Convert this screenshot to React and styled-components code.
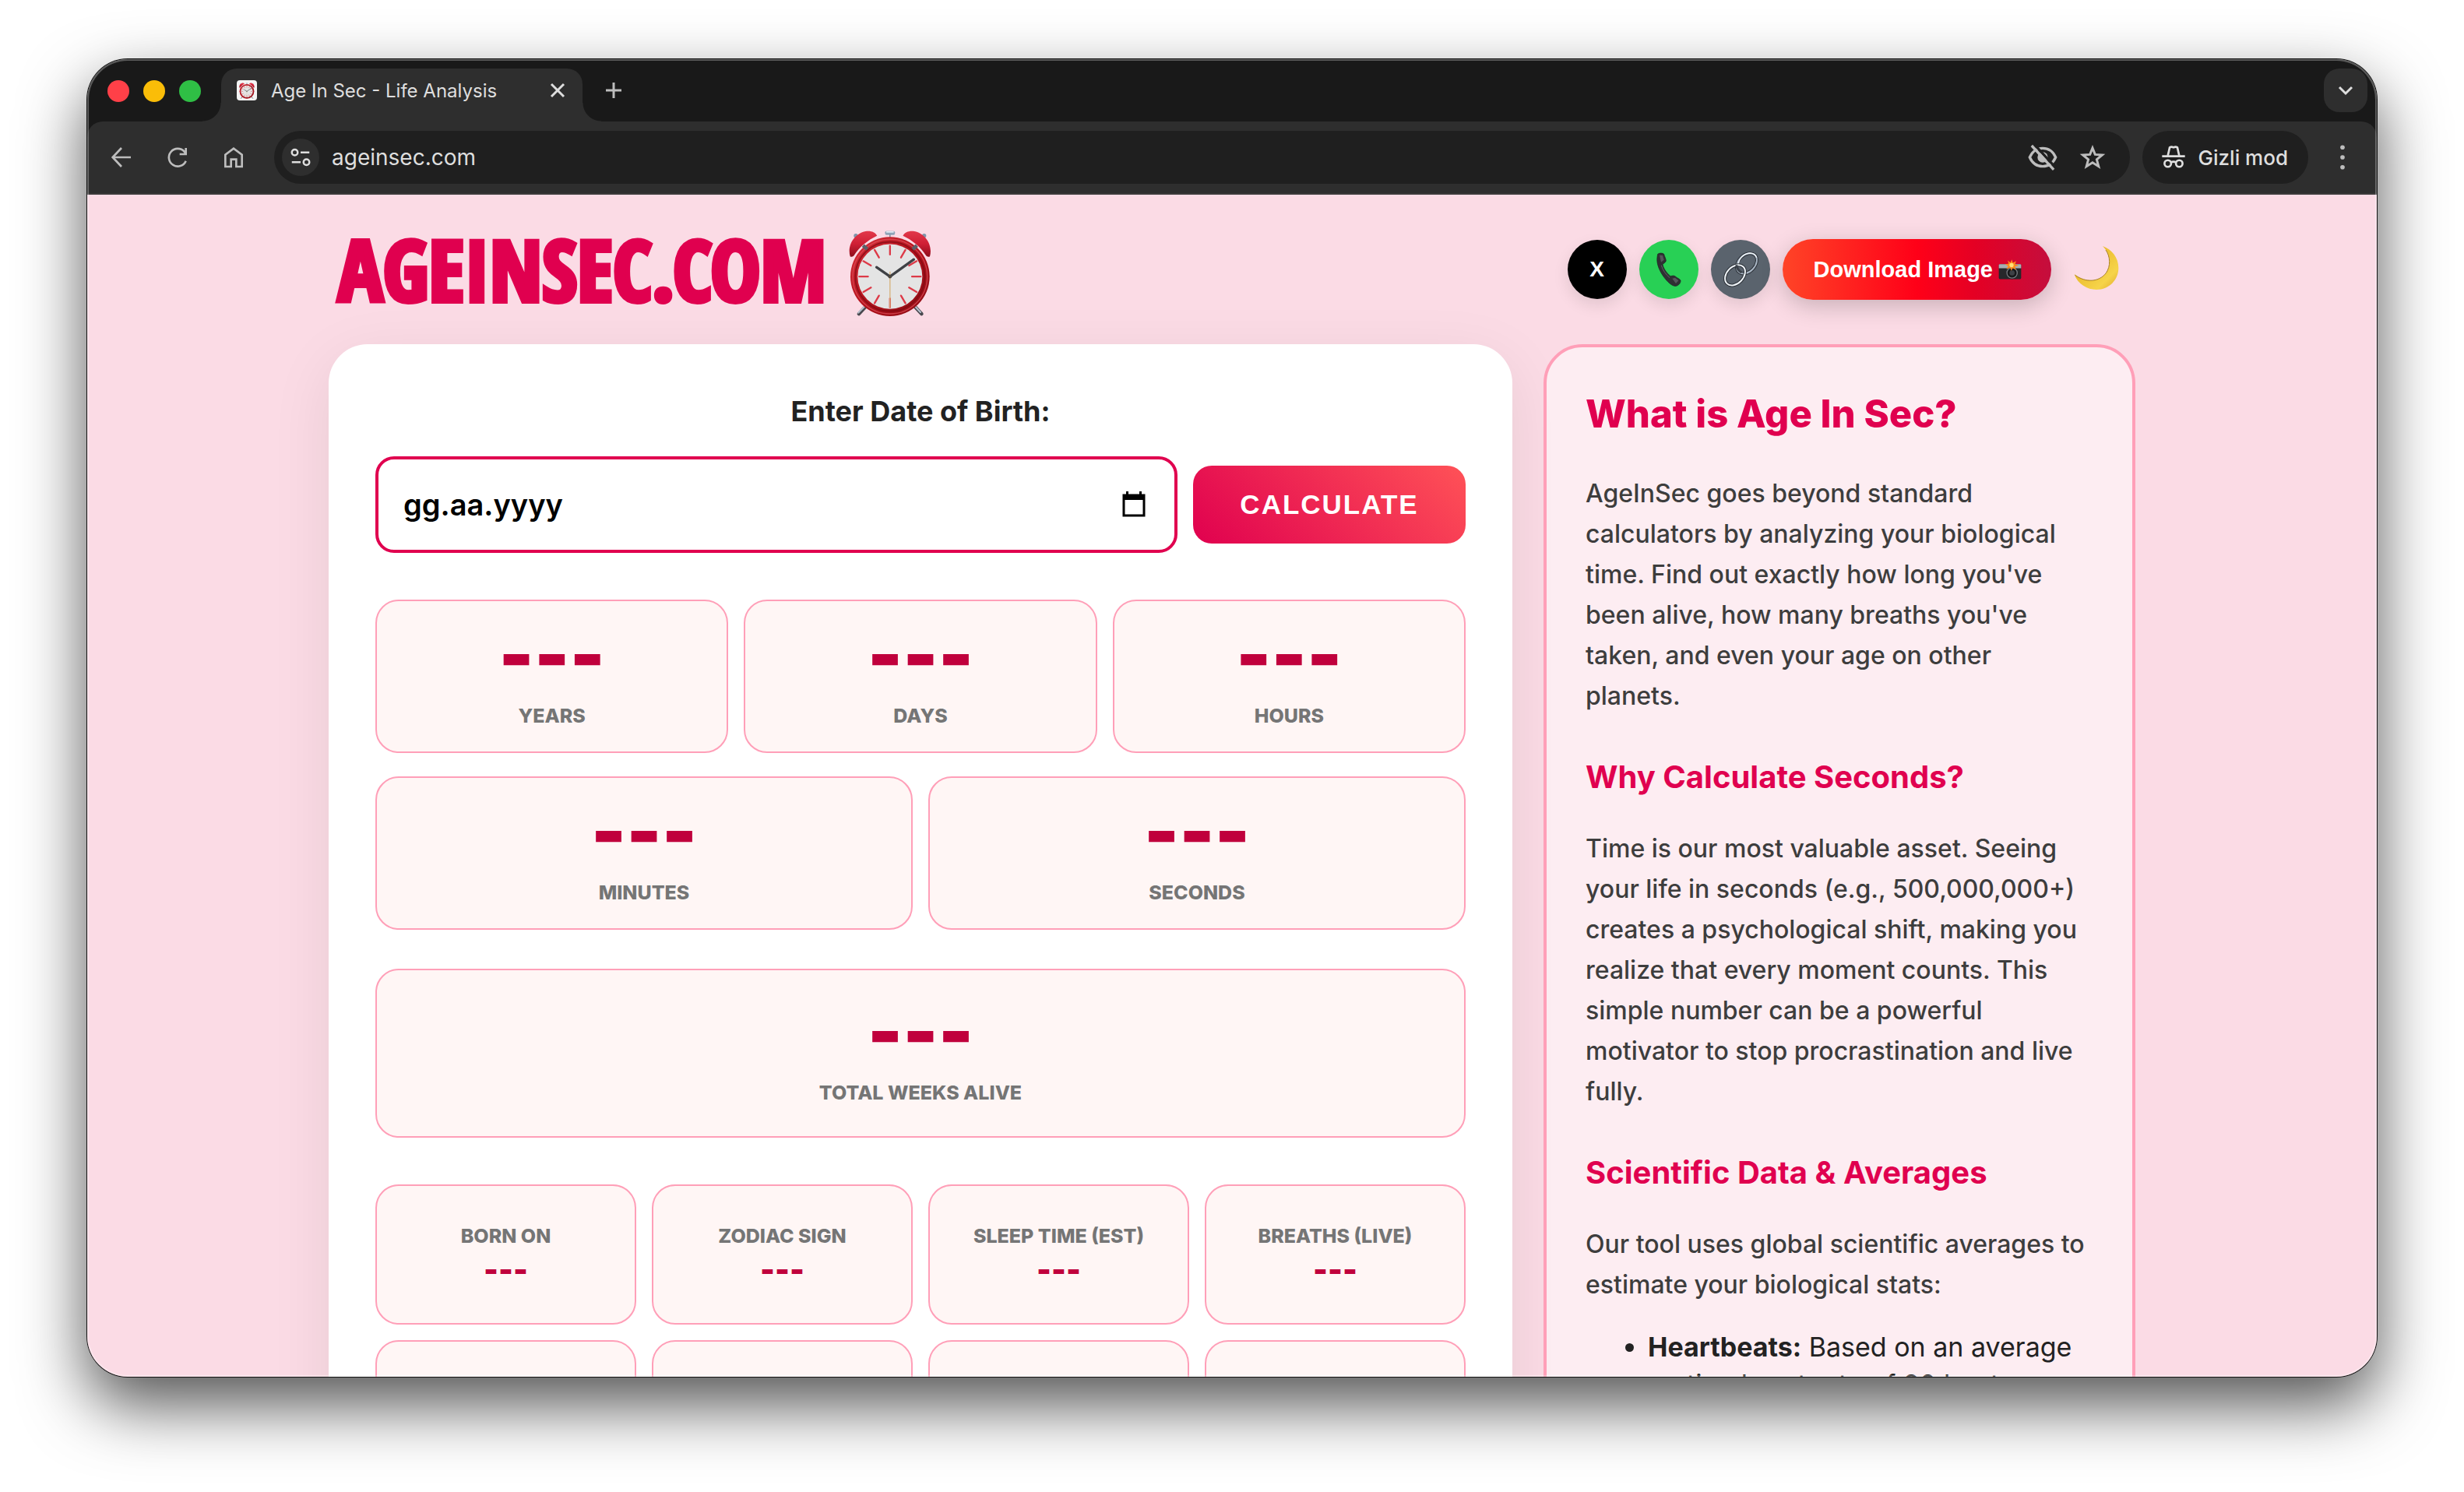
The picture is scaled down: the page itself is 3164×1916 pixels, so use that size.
import React from "react";
import styled, { createGlobalStyle } from "styled-components";

const GlobalStyle = createGlobalStyle`
  * {
    box-sizing: border-box;
  }

  body {
    margin: 0;
    background: #ffffff;
    font-family: Inter, sans-serif;
  }

  button,
  input {
    margin: 0;
    padding: 0;
    border: none;
    background: none;
    font-family: inherit;
  }

  svg {
    display: block;
  }
`;

/* ---------- browser window ---------- */

const Desktop = styled.div`
  height: 100vh;
  padding: 76px 112px 148px;
  overflow: hidden;
`;

const Window = styled.div`
  position: relative;
  height: 100%;
  display: flex;
  flex-direction: column;
  overflow: hidden;
  border-radius: 52px;
  background: #191919;
`;

const WindowShadow = styled.div`
  height: 100%;
  border-radius: 52px;
  box-shadow: 0 0 0 1px #101010, 0 36px 84px rgba(0, 0, 0, 0.68);
`;

const WindowEdge = styled.div`
  position: absolute;
  inset: 0;
  border-radius: 52px;
  box-shadow: inset 0 0 0 2px rgba(255, 255, 255, 0.28);
  pointer-events: none;
`;

const TabBar = styled.div`
  display: flex;
  flex: none;
  height: 80px;
  padding: 12px 12px 0 26px;
`;

const Lights = styled.div`
  display: flex;
  align-items: center;
  gap: 18px;
  height: 58px;
  margin-right: 26px;
`;

const Light = styled.span`
  width: 28px;
  height: 28px;
  border-radius: 50%;
  background: ${(props) => props.$color};
`;

const Tab = styled.div`
  position: relative;
  display: flex;
  align-items: center;
  width: 464px;
  padding: 0 16px 12px 20px;
  border-radius: 20px 20px 0 0;
  background: #2e2e2e;

  &::before,
  &::after {
    content: "";
    position: absolute;
    bottom: 0;
    width: 24px;
    height: 24px;
  }

  &::before {
    right: 100%;
    background: radial-gradient(circle at 0 0, transparent 23px, #2e2e2e 24px);
  }

  &::after {
    left: 100%;
    background: radial-gradient(circle at 100% 0, transparent 23px, #2e2e2e 24px);
  }
`;

const Favicon = styled.span`
  display: grid;
  place-items: center;
  width: 26px;
  height: 26px;
  margin-right: 18px;
  border-radius: 4px;
  background: #f4f4f4;
`;

const TabTitle = styled.span`
  flex: 1;
  font-size: 24px;
  color: #dedede;
  white-space: nowrap;
`;

const IconButton = styled.button`
  display: grid;
  place-items: center;
  flex: none;
  width: ${(props) => props.$size || 56}px;
  height: ${(props) => props.$size || 56}px;
  border-radius: 20px;
  color: ${(props) => (props.$bright ? "#dedede" : "#bdbdbd")};
  background: ${(props) => (props.$filled ? "#2e2e2e" : "transparent")};
`;

const NewTab = styled(IconButton)`
  margin: 0 auto 0 12px;
`;

const Toolbar = styled.div`
  display: flex;
  flex: none;
  align-items: center;
  gap: 16px;
  height: 94px;
  padding: 0 16px;
  border-bottom: 2px solid #3a3a3a;
  border-radius: 20px 20px 0 0;
  background: #2e2e2e;
`;

const AddressBar = styled.div`
  display: flex;
  align-items: center;
  flex: 1;
  height: 68px;
  margin-left: 8px;
  padding: 0 28px 0 10px;
  border-radius: 34px;
  background: #1f1f1f;
`;

const SiteInfo = styled(IconButton)`
  border-radius: 50%;
  margin-right: 16px;
`;

const Address = styled.input`
  flex: 1;
  min-width: 0;
  font-size: 28px;
  color: #dedede;
  outline: none;
`;

const AddressActions = styled.div`
  display: flex;
  gap: 24px;
`;

const Incognito = styled.button`
  display: flex;
  align-items: center;
  gap: 16px;
  height: 68px;
  padding: 0 26px 0 24px;
  border-radius: 34px;
  background: #1f1f1f;
  color: #dedede;
  font-size: 26px;
  font-weight: 500;
`;

/* ---------- page ---------- */

const Page = styled.div`
  flex: 1;
  min-height: 0;
  overflow: hidden;
  padding: 0 40px;
  background: #fbdbe5;
`;

const Container = styled.div`
  max-width: 2320px;
  margin: 0 auto;
`;

const Header = styled.header`
  display: flex;
  align-items: center;
  justify-content: space-between;
  min-height: 192px;
  padding: 0 20px 0 12px;
`;

const Brand = styled.h1`
  display: flex;
  align-items: center;
  gap: 28px;
  margin: 0;
  font-family: "Open Sans Condensed", "Roboto Condensed", sans-serif;
  font-size: 108px;
  line-height: 112px;
  font-weight: 900;
  color: #e0004f;
  -webkit-text-stroke: 6px #e0004f;
`;

const Actions = styled.div`
  display: flex;
  align-items: center;
  gap: 16px;
`;

const RoundButton = styled.button`
  display: grid;
  place-items: center;
  width: 76px;
  height: 76px;
  border-radius: 50%;
  background: ${(props) => props.$color};
  color: #ffffff;
  font-family: "Liberation Sans", sans-serif;
  font-size: 28px;
  font-weight: 700;
  box-shadow: 0 8px 20px rgba(0, 0, 0, 0.1);
`;

const DownloadButton = styled.button`
  display: flex;
  align-items: center;
  gap: 7px;
  height: 78px;
  padding: 0 38px 0 40px;
  border-radius: 39px;
  background: linear-gradient(90deg, #ff4427, #ff0018 50%, #e40024 72%, #c40e3d);
  color: #ffffff;
  font-family: "Liberation Sans", sans-serif;
  font-size: 29px;
  font-weight: 700;
  box-shadow: 0 8px 30px rgba(0, 0, 0, 0.2);
`;

const MoonButton = styled.button`
  margin-left: 12px;
`;

const Columns = styled.div`
  display: grid;
  grid-template-columns: 2fr 1fr;
  gap: 40px;
`;

const Card = styled.main`
  padding: 60px;
  border-radius: 50px;
  background: #ffffff;
  box-shadow: 0 20px 80px rgba(0, 0, 0, 0.08);
`;

const DateLabel = styled.label`
  display: block;
  margin-bottom: 32px;
  text-align: center;
  font-size: 36px;
  line-height: 52px;
  font-weight: 700;
  color: #222222;
`;

const Form = styled.form`
  display: flex;
  align-items: center;
  gap: 20px;
  margin-bottom: 60px;
`;

const DateField = styled.div`
  display: flex;
  align-items: center;
  flex: 1;
  height: 124px;
  padding: 0 32px;
  border: 4px solid #e0004f;
  border-radius: 24px;
`;

const DateInput = styled.input`
  flex: 1;
  min-width: 0;
  font-size: 38px;
  font-weight: 600;
  color: #000000;
  outline: none;
`;

const CalculateButton = styled.button`
  width: 350px;
  height: 100px;
  border-radius: 24px;
  background: linear-gradient(45deg, #e0004f, #ff5257);
  color: #ffffff;
  font-family: "Liberation Sans", sans-serif;
  font-size: 35px;
  font-weight: 700;
  letter-spacing: 2px;
`;

const StatRow = styled.div`
  display: grid;
  grid-template-columns: repeat(${(props) => props.$columns}, 1fr);
  gap: 20px;
  margin-bottom: ${(props) => props.$space || 0}px;
`;

const Stat = styled.div`
  padding: ${(props) => (props.$tall ? "42px 20px 38px" : "32px 20px 28px")};
  border: 2px solid #ff9fb8;
  border-radius: 30px;
  background: #fff6f5;
  text-align: center;
`;

const MiniStat = styled(Stat)`
  min-height: 180px;
  padding: 46px 10px 40px;
`;

const StatValue = styled.div`
  margin-bottom: 25px;
  font-size: 96px;
  line-height: 72px;
  font-weight: 900;
  color: #c0003c;
`;

const MiniValue = styled.div`
  font-size: 40px;
  line-height: 52px;
  font-weight: 900;
  color: #c0003c;
`;

const StatLabel = styled.div`
  font-size: 25px;
  line-height: 36px;
  font-weight: 800;
  color: #757575;
  text-transform: uppercase;
`;

const Aside = styled.aside`
  padding: 52px 50px 50px;
  border: 4px solid #ff9fb8;
  border-radius: 50px;
  background: rgba(255, 255, 255, 0.5);
`;

const AsideTitle = styled.h2`
  margin: 0 0 42px;
  font-size: 49px;
  line-height: 68px;
  font-weight: 800;
  color: #e0004f;
`;

const AsideHeading = styled.h3`
  margin: 48px 0 36px;
  font-size: 40px;
  line-height: 60px;
  font-weight: 700;
  color: #e0004f;
`;

const Text = styled.p`
  margin: 0;
  padding-right: 10px;
  font-size: 32px;
  line-height: 52px;
  font-weight: 500;
  color: #3d3d3d;
`;

const List = styled.ul`
  margin: 30px 0 0;
  padding-left: 80px;
  font-size: 34px;
  line-height: 48px;
  color: #222222;
`;

/* ---------- icons ---------- */

const Line = ({ size = 32, width = 2, children }) => (
  <svg
    width={size}
    height={size}
    viewBox="0 0 24 24"
    fill="none"
    stroke="currentColor"
    strokeWidth={width}
    aria-hidden="true"
  >
    {children}
  </svg>
);

const ticks = [0, 30, 60, 90, 120, 150, 180, 210, 240, 270, 300, 330];

const Clock = ({ width, height, viewBox = "60 16 325 364" }) => (
  <svg width={width} height={height} viewBox={viewBox} aria-hidden="true">
    <defs>
      <linearGradient id="bell" x1="0" y1="0" x2="0" y2="1">
        <stop offset="0" stopColor="#e2384a" />
        <stop offset="0.5" stopColor="#cf1f35" />
        <stop offset="1" stopColor="#8e0e1c" />
      </linearGradient>
      <linearGradient id="rim" x1="0" y1="0" x2="1" y2="1">
        <stop offset="0" stopColor="#d8303c" />
        <stop offset="0.5" stopColor="#b3121c" />
        <stop offset="1" stopColor="#8b0c14" />
      </linearGradient>
    </defs>
    <g strokeLinecap="round">
      <path d="M102 368L130 338M344 368L316 338" stroke="#4a4a50" strokeWidth="14" />
      <path d="M100 364L127 336M340 362L315 335" stroke="#b9c4d0" strokeWidth="6" />
    </g>
    <g stroke="none">
      <circle cx="90" cy="66" r="8" fill="#7f95ab" />
      <circle cx="354" cy="66" r="8" fill="#7f95ab" />
      <rect x="203" y="48" width="38" height="15" rx="5" fill="#8fa4b8" />
      <rect x="207" y="49" width="30" height="5" rx="2" fill="#dfe9f2" />
    </g>
    <path d="M222 60V84" stroke="#8794a3" strokeWidth="5" />
    <circle cx="222" cy="224" r="153" fill="url(#rim)" stroke="none" />
    <circle cx="222" cy="224" r="144" fill="none" stroke="#e0525c" strokeWidth="4" opacity="0.7" />
    <circle cx="222" cy="224" r="134" fill="none" stroke="#7d0a12" strokeWidth="5" opacity="0.7" />
    <path d="M118 104L134 118M326 104L310 118" stroke="#5b6069" strokeWidth="14" />
    <g fill="url(#bell)" stroke="none">
      <path d="M68 146C56 106 82 58 128 49C148 46 164 52 172 66C138 82 104 108 82 144C77 148 71 149 68 146Z" />
      <path d="M376 146C388 106 362 58 316 49C296 46 280 52 272 66C306 82 340 108 362 144C367 148 373 149 376 146Z" />
    </g>
    <circle cx="222" cy="224" r="125" fill="#e4e4e4" stroke="none" />
    <g stroke="#dd3a48" strokeWidth="7" strokeLinecap="round">
      {ticks.map((angle) => (
        <path key={angle} d="M222 105V139" transform={`rotate(${angle} 222 224)`} />
      ))}
    </g>
    <path d="M222 205V345" stroke="#d7b27c" strokeWidth="4" />
    <path d="M222 224L170 188M222 224L314 158" stroke="#3f4145" strokeWidth="10" strokeLinecap="round" />
    <circle cx="222" cy="224" r="7" fill="#4b4640" stroke="none" />
  </svg>
);

const Phone = () => (
  <svg width="76" height="76" viewBox="42 53 228 228" aria-hidden="true">
    <path
      d="M113 108C119 103 132 103 137 108C139 117 144 124 145 133C144 141 134 143 132 148C136 166 148 181 162 193C170 191 176 190 181 194C188 201 197 202 201 209C202 219 194 229 183 231C168 233 149 213 138 198C122 177 107 146 111 120Z"
      fill="#2f3033"
      stroke="#1d1e20"
      strokeWidth="2"
    />
    <path d="M120 112L132 113L137 130L126 139ZM169 202L180 199L193 210L183 221Z" fill="#55575b" />
    <path d="M127 151C132 170 144 186 159 199" fill="none" stroke="#606266" strokeWidth="3" />
  </svg>
);

const Link = () => (
  <svg width="76" height="76" viewBox="318 53 228 228" fill="none" aria-hidden="true">
    <ellipse cx="456" cy="144" rx="45" ry="32" transform="rotate(-46 456 144)" stroke="#2c3138" strokeWidth="12" />
    <ellipse cx="456" cy="144" rx="45" ry="32" transform="rotate(-46 456 144)" stroke="#a9b6c4" strokeWidth="6" />
    <path d="M424 150C423 127 444 105 468 104C480 104 490 110 494 121" stroke="#f2f7fb" strokeWidth="4" />
    <ellipse cx="411" cy="189" rx="45" ry="32" transform="rotate(-46 411 189)" stroke="#2c3138" strokeWidth="12" />
    <ellipse cx="411" cy="189" rx="45" ry="32" transform="rotate(-46 411 189)" stroke="#eef3f7" strokeWidth="6" />
    <path d="M416 150C418 164 425 173 436 179" stroke="#3b4149" strokeWidth="9" />
  </svg>
);

const Camera = () => (
  <svg width="30" height="27" viewBox="74 128 90 80" aria-hidden="true">
    <rect x="76" y="146" width="86" height="58" rx="5" fill="#26272a" />
    <path d="M76 162V150Q76 146 81 146H157Q162 146 162 150V162Z" fill="#a9adb2" />
    <circle cx="127" cy="180" r="23" fill="#17181a" />
    <circle cx="127" cy="180" r="20" fill="none" stroke="#777b80" strokeWidth="4" />
    <circle cx="127" cy="180" r="10" fill="#3d4146" />
    <path d="M126 128L130 141L143 134L138 147L153 151L138 156L143 168L130 161L124 172L120 160L105 166L112 154L100 147L114 144L110 132L121 140Z" fill="#ff8a1c" />
    <circle cx="125" cy="150" r="8" fill="#ffe27a" />
  </svg>
);

const Moon = () => (
  <svg width="60" height="60" viewBox="370 78 180 180" aria-hidden="true">
    <defs>
      <linearGradient id="moon" x1="0" y1="0" x2="1" y2="1">
        <stop offset="0.3" stopColor="#e9b92b" />
        <stop offset="0.75" stopColor="#f6d44a" />
        <stop offset="1" stopColor="#dfa92c" />
      </linearGradient>
    </defs>
    <path
      d="M484 78C511 104 520 151 497 182C470 217 419 220 375 187C388 225 425 246 460 246C510 246 545 207 545 162C545 122 519 91 484 78Z"
      fill="url(#moon)"
    />
    <path d="M378 190C419 220 470 217 497 182C516 155 513 117 496 93" fill="none" stroke="#a8802a" strokeWidth="3" />
  </svg>
);

/* ---------- data ---------- */

const topStats = ["Years", "Days", "Hours"];
const midStats = ["Minutes", "Seconds"];
const miniStats = ["Born on", "Zodiac sign", "Sleep time (est)", "Breaths (live)"];

const StatBox = ({ label, tall }) => (
  <Stat $tall={tall}>
    <StatValue>---</StatValue>
    <StatLabel>{label}</StatLabel>
  </Stat>
);

const BrowserBar = () => (
  <>
    <TabBar>
      <Lights>
        <Light $color="#ff4048" />
        <Light $color="#fabd08" />
        <Light $color="#2fbf45" />
      </Lights>
      <Tab>
        <Favicon>
          <Clock width={20} height={21} viewBox="60 40 325 340" />
        </Favicon>
        <TabTitle>Age In Sec - Life Analysis</TabTitle>
        <IconButton $size={32} $bright aria-label="Close tab">
          <Line size={24} width={3}>
            <path d="M4 4L20 20M20 4L4 20" />
          </Line>
        </IconButton>
      </Tab>
      <NewTab aria-label="New tab">
        <Line size={24} width={3}>
          <path d="M12 2V22M2 12H22" />
        </Line>
      </NewTab>
      <IconButton $bright $filled aria-label="Search tabs">
        <Line size={24} width={3}>
          <path d="M4 8L12 16L20 8" />
        </Line>
      </IconButton>
    </TabBar>
    <Toolbar>
      <IconButton aria-label="Back">
        <Line>
          <path d="M21 12H4M12 3L3.500 12L12 21" />
        </Line>
      </IconButton>
      <IconButton aria-label="Reload">
        <Line>
          <path d="M20 15.500A8.500 8.500 0 1 1 18.500 6.500L20 8.500M20 3V9H14" />
        </Line>
      </IconButton>
      <IconButton aria-label="Home">
        <Line>
          <path d="M4 21V9.500L12 3.500L20 9.500V21H14.500V14H9.500V21Z" />
        </Line>
      </IconButton>
      <AddressBar>
        <SiteInfo $size={48} $bright $filled aria-label="Site information">
          <Line size={30}>
            <circle cx="6" cy="7" r="3" />
            <path d="M12 7H21M3 17H12" />
            <circle cx="18" cy="17" r="3" />
          </Line>
        </SiteInfo>
        <Address aria-label="Address" defaultValue="ageinsec.com" />
        <AddressActions>
          <IconButton $size={40} aria-label="Tracking protection">
            <Line size={40}>
              <path d="M2 12C4 7.500 7.700 5 12 5S20 7.500 22 12C20 16.500 16.300 19 12 19S4 16.500 2 12Z" />
              <circle cx="12" cy="12" r="4" fill="currentColor" stroke="none" />
              <path d="M5.500 2L22 20" stroke="#1f1f1f" />
              <path d="M3.500 3L20.500 21.500" />
            </Line>
          </IconButton>
          <IconButton $size={40} aria-label="Bookmark">
            <Line size={36}>
              <path d="M12 4L14.200 9.600L20.300 10L15.600 13.900L17.200 19.800L12 16.500L6.800 19.800L8.400 13.900L3.700 10L9.800 9.600Z" />
            </Line>
          </IconButton>
        </AddressActions>
      </AddressBar>
      <Incognito>
        <Line size={32}>
          <path d="M1 11H23" />
          <path d="M6.500 10.500L8.300 2.500Q10 1.500 12 2.500Q14 1.500 15.700 2.500L17.500 10.500" />
          <circle cx="6.500" cy="18" r="3.200" />
          <circle cx="17.500" cy="18" r="3.200" />
          <path d="M9.500 17Q12 15.500 14.500 17" />
        </Line>
        Gizli mod
      </Incognito>
      <IconButton aria-label="Menu">
        <Line size={34}>
          <g fill="currentColor" stroke="none">
            <circle cx="12" cy="3" r="2" />
            <circle cx="12" cy="12" r="2" />
            <circle cx="12" cy="21" r="2" />
          </g>
        </Line>
      </IconButton>
    </Toolbar>
  </>
);

const Calculator = () => (
  <Card>
    <DateLabel htmlFor="birth">Enter Date of Birth:</DateLabel>
    <Form onSubmit={(e) => e.preventDefault()}>
      <DateField>
        <DateInput id="birth" type="text" defaultValue="gg.aa.yyyy" />
        <button type="button" aria-label="Open calendar">
          <svg width="40" height="36" viewBox="0 0 40 36" aria-hidden="true">
            <path d="M7 6H33V32H7Z" fill="none" stroke="#000" strokeWidth="3" />
            <path d="M6 5H34V12H6ZM10 1H13V6H10ZM27 1H30V6H27Z" />
          </svg>
        </button>
      </DateField>
      <CalculateButton type="submit">CALCULATE</CalculateButton>
    </Form>
    <StatRow $columns={3} $space={30}>
      {topStats.map((label) => (
        <StatBox key={label} label={label} />
      ))}
    </StatRow>
    <StatRow $columns={2} $space={50}>
      {midStats.map((label) => (
        <StatBox key={label} label={label} />
      ))}
    </StatRow>
    <StatRow $columns={1} $space={60}>
      <StatBox label="Total weeks alive" tall />
    </StatRow>
    <StatRow $columns={4}>
      {miniStats.map((label) => (
        <MiniStat key={label}>
          <StatLabel>{label}</StatLabel>
          <MiniValue>---</MiniValue>
        </MiniStat>
      ))}
      {miniStats.map((label) => (
        <MiniStat key={`${label}-next`} />
      ))}
    </StatRow>
  </Card>
);

const About = () => (
  <Aside>
    <AsideTitle>What is Age In Sec?</AsideTitle>
    <Text>
      AgeInSec goes beyond standard calculators by analyzing your biological
      time. Find out exactly how long you've been alive, how many breaths
      you've taken, and even your age on other planets.
    </Text>
    <AsideHeading>Why Calculate Seconds?</AsideHeading>
    <Text>
      Time is our most valuable asset. Seeing your life in seconds (e.g.,
      500,000,000+) creates a psychological shift, making you realize that
      every moment counts. This simple number can be a powerful motivator to
      stop procrastination and live fully.
    </Text>
    <AsideHeading>Scientific Data & Averages</AsideHeading>
    <Text>
      Our tool uses global scientific averages to estimate your biological
      stats:
    </Text>
    <List>
      <li>
        <strong>Heartbeats:</strong> Based on an average resting heart rate of
        80 beats
      </li>
    </List>
  </Aside>
);

const App = () => {
  return (
    <>
      <GlobalStyle />
      <Desktop>
        <WindowShadow>
          <Window>
            <BrowserBar />
            <Page>
              <Container>
                <Header>
                  <Brand>
                    AGEINSEC.COM
                    <Clock width={108} height={121} />
                  </Brand>
                  <Actions>
                    <RoundButton $color="#000000">X</RoundButton>
                    <RoundButton $color="#28d055" aria-label="WhatsApp">
                      <Phone />
                    </RoundButton>
                    <RoundButton $color="#5a636d" aria-label="Copy link">
                      <Link />
                    </RoundButton>
                    <DownloadButton>
                      Download Image
                      <Camera />
                    </DownloadButton>
                    <MoonButton aria-label="Dark mode">
                      <Moon />
                    </MoonButton>
                  </Actions>
                </Header>
                <Columns>
                  <Calculator />
                  <About />
                </Columns>
              </Container>
            </Page>
            <WindowEdge />
          </Window>
        </WindowShadow>
      </Desktop>
    </>
  );
};

export default App;
